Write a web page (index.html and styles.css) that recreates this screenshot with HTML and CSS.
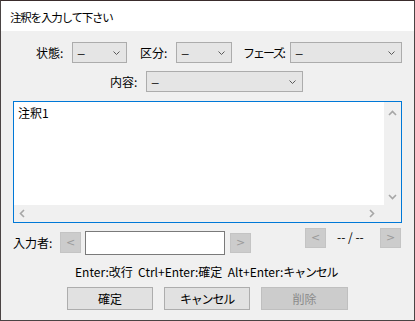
FILE: index.html
```html
<!DOCTYPE html>
<html lang="ja">
<head>
<meta charset="utf-8">
<link rel="stylesheet" href="styles.css">
</head>
<body>
<div class="window">
  <div class="titlebar">注釈を入力して下さい</div>
  <div class="body">
    <div class="row row1">
      <span class="label l1">状態:</span>
      <div class="select s1"><span class="val">–</span><svg class="chev" width="7" height="4" viewBox="0 0 7 4"><path d="M0.5 0.5 L3.5 3.5 L6.5 0.5" fill="none" stroke="#5a5a5a" stroke-width="1"/></svg></div>
      <span class="label l2">区分:</span>
      <div class="select s2"><span class="val">–</span><svg class="chev" width="7" height="4" viewBox="0 0 7 4"><path d="M0.5 0.5 L3.5 3.5 L6.5 0.5" fill="none" stroke="#5a5a5a" stroke-width="1"/></svg></div>
      <span class="label l3">フェーズ:</span>
      <div class="select s3"><span class="val">–</span><svg class="chev" width="7" height="4" viewBox="0 0 7 4"><path d="M0.5 0.5 L3.5 3.5 L6.5 0.5" fill="none" stroke="#5a5a5a" stroke-width="1"/></svg></div>
    </div>
    <div class="row row2">
      <span class="label l4">内容:</span>
      <div class="select s4"><span class="val">–</span><svg class="chev" width="7" height="4" viewBox="0 0 7 4"><path d="M0.5 0.5 L3.5 3.5 L6.5 0.5" fill="none" stroke="#5a5a5a" stroke-width="1"/></svg></div>
    </div>
    <div class="textarea">
      <div class="ta-main">
        <div class="ta-content">注釈1</div>
        <div class="vscroll">
          <svg width="9" height="6" viewBox="0 0 9 6"><path d="M1 5 L4.5 1.5 L8 5" fill="none" stroke="#a6a6a6" stroke-width="1.6"/></svg>
          <svg width="9" height="6" viewBox="0 0 9 6"><path d="M1 1 L4.5 4.5 L8 1" fill="none" stroke="#a6a6a6" stroke-width="1.6"/></svg>
        </div>
      </div>
      <div class="hscroll">
        <div class="hbar">
          <svg width="6" height="9" viewBox="0 0 6 9"><path d="M5 1 L1.5 4.5 L5 8" fill="none" stroke="#a6a6a6" stroke-width="1.6"/></svg>
          <svg width="6" height="9" viewBox="0 0 6 9"><path d="M1 1 L4.5 4.5 L1 8" fill="none" stroke="#a6a6a6" stroke-width="1.6"/></svg>
        </div>
        <div class="corner"></div>
      </div>
    </div>
    <div class="row row-author">
      <span class="label l5">入力者:</span>
      <div class="nbtn b-prev">&lt;</div>
      <div class="input"></div>
      <div class="nbtn b-next">&gt;</div>
      <div class="nbtn b-nprev">&lt;</div>
      <span class="pager">-- / --</span>
      <div class="nbtn b-nnext">&gt;</div>
    </div>
    <div class="hint">Enter:改行&nbsp;&nbsp;Ctrl+Enter:確定&nbsp;&nbsp;Alt+Enter:<span class="kana">キャンセル</span></div>
    <div class="row buttons">
      <div class="btn">確定</div>
      <div class="btn"><span class="kana">キャンセル</span></div>
      <div class="btn disabled">削除</div>
    </div>
  </div>
</div>
</body>
</html>
```

FILE: styles.css
```css
* { box-sizing: border-box; }
html, body { margin: 0; padding: 0; }
body {
  width: 415px;
  height: 321px;
  overflow: hidden;
  font-family: "Noto Sans CJK JP", "Noto Sans", sans-serif;
  font-size: 12px;
  line-height: 16px;
  color: #000;
  background: #3a3030;
}
.window {
  width: 415px;
  height: 321px;
  border: 1px solid #4a4444;
  border-top-color: #3a2c2c;
  background: #f0f0f0;
  display: flex;
  flex-direction: column;
}
.titlebar {
  height: 30px;
  background: #fff;
  padding: 8px 0 0 9px;
  font-size: 11.5px;
  letter-spacing: -1.2px;
  color: #000;
}
.body {
  flex: 1;
  display: flex;
  flex-direction: column;
}
.row { display: flex; align-items: center; }
.row1 { margin-top: 11px; }
.row2 { margin-top: 8px; }
.label { display: block; white-space: nowrap; }
.l1 { margin-left: 35px; width: 36px; }
.l2 { margin-left: 13px; width: 36px; }
.l3 { margin-left: 11px; width: 47px; letter-spacing: -2px; }
.l4 { margin-left: 109px; width: 36px; }
.kana { letter-spacing: -1.2px; }
.select {
  height: 21px;
  background: #e5e5e5;
  border: 1px solid #acacac;
  display: flex;
  align-items: center;
  justify-content: space-between;
  padding: 0 6px 0 4px;
}
.select .val {
  display: inline-block;
  line-height: 16px;
  transform: scaleX(1.3);
  transform-origin: left center;
}
.select .chev { margin-top: 1px; }
.s1 { width: 55px; }
.s2 { width: 56px; }
.s3 { width: 112px; }
.s4 { width: 157px; }

.textarea {
  margin: 9px 0 0 12px;
  width: 389px;
  height: 122px;
  border: 1px solid #0078d7;
  background: #fff;
  display: flex;
  flex-direction: column;
}
.ta-main { flex: 1; display: flex; }
.ta-content { flex: 1; padding: 3px 0 0 4px; }
.vscroll {
  width: 17px;
  background: #f0f0f0;
  display: flex;
  flex-direction: column;
  align-items: center;
  justify-content: space-between;
  padding: 8px 0 5px;
}
.hscroll { height: 17px; display: flex; }
.hbar {
  flex: 1;
  background: #f0f0f0;
  display: flex;
  align-items: center;
  justify-content: space-between;
  padding: 0 9px 0 5px;
}
.corner { width: 17px; background: #f0f0f0; }

.row-author { margin-top: 5px; align-items: flex-start; height: 28px; }
.l5 { margin-left: 12px; margin-top: 7px; width: 47px; }
.nbtn {
  width: 21px;
  height: 21px;
  background: #cccccc;
  border: 1px solid #c4c4c4;
  color: #9a9a9a;
  font-family: "DejaVu Sans", sans-serif;
  font-size: 11px;
  display: flex;
  align-items: center;
  justify-content: center;
}
.b-prev { margin-top: 4px; }
.input {
  margin-left: 4px;
  margin-top: 3px;
  width: 140px;
  height: 24px;
  background: #fff;
  border: 1px solid #7a7a7a;
}
.b-next { margin-left: 5px; margin-top: 5px; height: 20px; }
.b-nprev { margin-left: 54px; height: 20px; }
.pager { margin-left: 11px; margin-top: 1px; width: 43px; }
.b-nnext { height: 20px; }

.hint { margin: 8px 0 0 74px; white-space: nowrap; }
.buttons { margin-top: 7px; padding-left: 66px; gap: 11px; }
.btn {
  width: 86px;
  height: 23px;
  background: #e1e1e1;
  border: 1px solid #adadad;
  display: flex;
  align-items: center;
  justify-content: center;
}
.btn.disabled {
  background: #cccccc;
  border-color: #bfbfbf;
  color: #8a8a8a;
  width: 87px;
}
```
